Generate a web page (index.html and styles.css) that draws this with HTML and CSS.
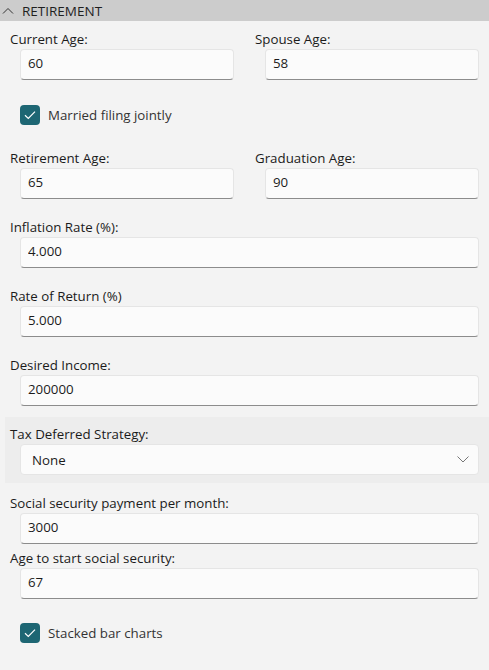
FILE: index.html
```html
<!DOCTYPE html>
<html lang="en">
<head>
    <meta charset="UTF-8">
    <meta name="viewport" content="width=device-width, initial-scale=1.0">
    <title>Retirement</title>
    <link rel="stylesheet" href="styles.css">
</head>
<body>
    <div class="section-header">
        <svg class="collapse-icon" width="12" height="7" viewBox="0 0 12 7">
            <polyline points="1,6.5 6,1.5 11,6.5" fill="none" stroke="#333" stroke-width="1"/>
        </svg>
        <span>RETIREMENT</span>
    </div>

    <div class="content">
        <div class="row">
            <div class="field">
                <label>Current Age:</label>
                <input class="text-box" type="text" value="60">
            </div>
            <div class="field">
                <label>Spouse Age:</label>
                <input class="text-box" type="text" value="58">
            </div>
        </div>

        <label class="check check-married">
            <span class="check-box">
                <svg width="12" height="10" viewBox="0 0 12 10">
                    <polyline points="1,5.2 4.3,8.4 11,1.6" fill="none" stroke="#fff" stroke-width="1.2"/>
                </svg>
            </span>
            Married filing jointly
        </label>

        <div class="row">
            <div class="field">
                <label>Retirement Age:</label>
                <input class="text-box" type="text" value="65">
            </div>
            <div class="field">
                <label>Graduation Age:</label>
                <input class="text-box" type="text" value="90">
            </div>
        </div>

        <div class="field spaced">
            <label>Inflation Rate (%):</label>
            <input class="text-box" type="text" value="4.000">
        </div>

        <div class="field spaced">
            <label>Rate of Return (%)</label>
            <input class="text-box" type="text" value="5.000">
        </div>

        <div class="field spaced">
            <label>Desired Income:</label>
            <input class="text-box" type="text" value="200000">
        </div>

        <div class="strategy">
            <div class="field">
                <label>Tax Deferred Strategy:</label>
                <div class="select">
                    <span>None</span>
                    <svg width="12" height="7" viewBox="0 0 12 7">
                        <polyline points="0.5,0.5 6,6 11.5,0.5" fill="none" stroke="#777" stroke-width="1"/>
                    </svg>
                </div>
            </div>
        </div>

        <div class="field">
            <label>Social security payment per month:</label>
            <input class="text-box" type="text" value="3000">
        </div>

        <div class="field tight">
            <label>Age to start social security:</label>
            <input class="text-box" type="text" value="67">
        </div>

        <label class="check check-stacked">
            <span class="check-box">
                <svg width="12" height="10" viewBox="0 0 12 10">
                    <polyline points="1,5.2 4.3,8.4 11,1.6" fill="none" stroke="#fff" stroke-width="1.2"/>
                </svg>
            </span>
            Stacked bar charts
        </label>
    </div>
</body>
</html>
```

FILE: styles.css
```css
body {
    margin: 0;
    font-family: 'Open Sans', 'Noto Sans', sans-serif;
    font-size: 13.3px;
    color: #1b1b1b;
    background-color: #f3f3f3;
}
.section-header {
    height: 21px;
    display: flex;
    align-items: center;
    gap: 8px;
    padding-left: 2px;
    background-color: #cccccc;
    font-size: 13.5px;
    color: #1f1f1f;
}
.collapse-icon {
    margin-top: -1px;
}
.content {
    padding: 9px 10px 20px 10px;
}
.row {
    display: grid;
    grid-template-columns: 1fr 1fr;
    column-gap: 21px;
}
.field label {
    display: block;
    line-height: 19px;
}
.text-box,
.select {
    display: block;
    width: calc(100% - 10px);
    height: 31px;
    margin-left: 10px;
    box-sizing: border-box;
    background-color: #fbfbfb;
    border: 1px solid #e5e5e5;
    border-bottom-color: #8c8c8c;
    border-radius: 4px;
    font-family: inherit;
    font-size: 13.3px;
    color: #1b1b1b;
}
.text-box {
    padding: 3px 7px 6px 7px;
    line-height: 19px;
    outline: none;
}
.select {
    display: flex;
    align-items: center;
    justify-content: space-between;
    padding: 0 9px 0 11px;
    border-bottom-color: #e5e5e5;
}
.spaced {
    margin-top: 19px;
}
.tight {
    margin-top: 5px;
}
.check {
    display: flex;
    align-items: center;
    gap: 8px;
    height: 20px;
    margin-left: 10px;
    color: #333;
}
.check-married {
    margin-top: 25px;
    margin-bottom: 24px;
}
.check-stacked {
    margin-top: 24px;
}
.check-box {
    width: 20px;
    height: 20px;
    display: flex;
    align-items: center;
    justify-content: center;
    border-radius: 4px;
    background-color: #1d6673;
}
.strategy {
    margin: 11px -10px 11px -5px;
    padding: 8px 10px 8px 5px;
    background-color: #ededed;
}
```
